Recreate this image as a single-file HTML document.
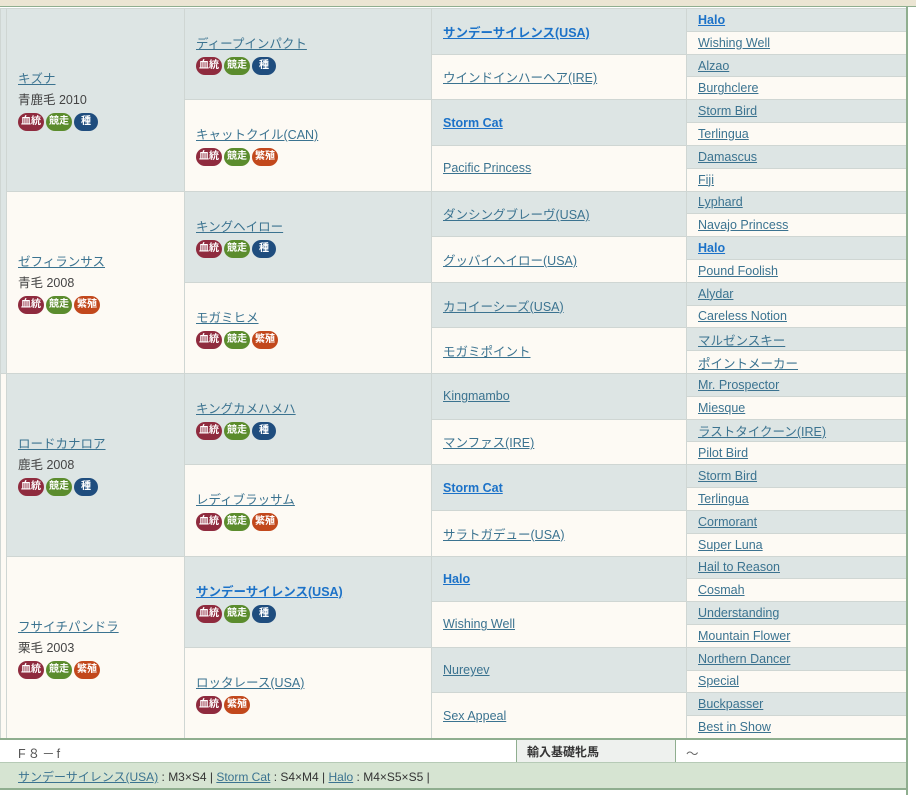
<!DOCTYPE html>
<html><head><meta charset="utf-8"><style>
*{margin:0;padding:0;box-sizing:border-box}
body{width:916px;height:795px;background:#fff;font-family:"Liberation Sans","Noto Sans CJK JP",sans-serif;font-size:12.5px;color:#333;position:relative;overflow:hidden}
#top{position:absolute;left:0;top:0;width:916px;height:7px;background:#ebe5d3;border-bottom:1px solid #8fae8f}
#rt{position:absolute;left:906px;top:7px;width:10px;height:788px;background:#fff;border-left:2px solid #8fae8f}
table{position:absolute;left:0;top:8px;width:906px;height:730px;border-collapse:collapse;table-layout:fixed}
td{border:1px solid #cfd6d3;vertical-align:middle;padding:0 0 0 11px;overflow:hidden;white-space:nowrap}
tr{height:22.8125px}
.g{background:#dde5e4}.c{background:#fdfaf4}
a{color:#3b7390;text-decoration:underline}
a.b{color:#1c72c8;font-weight:bold}
.s{color:#444;margin:2px 0 4px}
.bd{display:flex;gap:2px;margin-top:5px}
.bd span{display:inline-block;height:18px;border-radius:9px;color:#fff;font-size:10px;line-height:18px;padding:0 3px;font-weight:bold}
.r{background:#8f2b3e}.n{background:#5b8c2d}.v{background:#1f4d7e;width:24px;text-align:center}.o{background:#c2481c}
.x{padding:0}
#f1{position:absolute;left:0;top:738px;width:906px;height:24px;border-top:2px solid #8fae8f;background:#fff}
#f2{position:absolute;left:0;top:762px;width:906px;height:28px;background:#d6e4d2;border-top:1px solid #b6cab6;border-bottom:2px solid #8fae8f;font-size:12px;padding:5px 0 0 18px}
</style></head><body>
<div id="top"></div>
<table>
<colgroup><col style="width:6px"><col style="width:178px"><col style="width:247px"><col style="width:255px"><col style="width:220px"></colgroup>
<tr><td class="x g" rowspan="16"></td><td class="g" rowspan="8"><a>キズナ</a><div class="s">青鹿毛 2010</div><div class="bd"><span class="r">血統</span><span class="n">競走</span><span class="v">種</span></div></td><td class="g" rowspan="4"><a>ディープインパクト</a><div class="bd"><span class="r">血統</span><span class="n">競走</span><span class="v">種</span></div></td><td class="g" rowspan="2"><a class="b">サンデーサイレンス(USA)</a></td><td class="g"><a class="b">Halo</a></td></tr>
<tr><td class="c"><a>Wishing Well</a></td></tr>
<tr><td class="c" rowspan="2"><a>ウインドインハーヘア(IRE)</a></td><td class="g"><a>Alzao</a></td></tr>
<tr><td class="c"><a>Burghclere</a></td></tr>
<tr><td class="c" rowspan="4"><a>キャットクイル(CAN)</a><div class="bd"><span class="r">血統</span><span class="n">競走</span><span class="o">繁殖</span></div></td><td class="g" rowspan="2"><a class="b">Storm Cat</a></td><td class="g"><a>Storm Bird</a></td></tr>
<tr><td class="c"><a>Terlingua</a></td></tr>
<tr><td class="c" rowspan="2"><a>Pacific Princess</a></td><td class="g"><a>Damascus</a></td></tr>
<tr><td class="c"><a>Fiji</a></td></tr>
<tr><td class="c" rowspan="8"><a>ゼフィランサス</a><div class="s">青毛 2008</div><div class="bd"><span class="r">血統</span><span class="n">競走</span><span class="o">繁殖</span></div></td><td class="g" rowspan="4"><a>キングヘイロー</a><div class="bd"><span class="r">血統</span><span class="n">競走</span><span class="v">種</span></div></td><td class="g" rowspan="2"><a>ダンシングブレーヴ(USA)</a></td><td class="g"><a>Lyphard</a></td></tr>
<tr><td class="c"><a>Navajo Princess</a></td></tr>
<tr><td class="c" rowspan="2"><a>グッバイヘイロー(USA)</a></td><td class="g"><a class="b">Halo</a></td></tr>
<tr><td class="c"><a>Pound Foolish</a></td></tr>
<tr><td class="c" rowspan="4"><a>モガミヒメ</a><div class="bd"><span class="r">血統</span><span class="n">競走</span><span class="o">繁殖</span></div></td><td class="g" rowspan="2"><a>カコイーシーズ(USA)</a></td><td class="g"><a>Alydar</a></td></tr>
<tr><td class="c"><a>Careless Notion</a></td></tr>
<tr><td class="c" rowspan="2"><a>モガミポイント</a></td><td class="g"><a>マルゼンスキー</a></td></tr>
<tr><td class="c"><a>ポイントメーカー</a></td></tr>
<tr><td class="x c" rowspan="16"></td><td class="g" rowspan="8"><a>ロードカナロア</a><div class="s">鹿毛 2008</div><div class="bd"><span class="r">血統</span><span class="n">競走</span><span class="v">種</span></div></td><td class="g" rowspan="4"><a>キングカメハメハ</a><div class="bd"><span class="r">血統</span><span class="n">競走</span><span class="v">種</span></div></td><td class="g" rowspan="2"><a>Kingmambo</a></td><td class="g"><a>Mr. Prospector</a></td></tr>
<tr><td class="c"><a>Miesque</a></td></tr>
<tr><td class="c" rowspan="2"><a>マンファス(IRE)</a></td><td class="g"><a>ラストタイクーン(IRE)</a></td></tr>
<tr><td class="c"><a>Pilot Bird</a></td></tr>
<tr><td class="c" rowspan="4"><a>レディブラッサム</a><div class="bd"><span class="r">血統</span><span class="n">競走</span><span class="o">繁殖</span></div></td><td class="g" rowspan="2"><a class="b">Storm Cat</a></td><td class="g"><a>Storm Bird</a></td></tr>
<tr><td class="c"><a>Terlingua</a></td></tr>
<tr><td class="c" rowspan="2"><a>サラトガデュー(USA)</a></td><td class="g"><a>Cormorant</a></td></tr>
<tr><td class="c"><a>Super Luna</a></td></tr>
<tr><td class="c" rowspan="8"><a>フサイチパンドラ</a><div class="s">栗毛 2003</div><div class="bd"><span class="r">血統</span><span class="n">競走</span><span class="o">繁殖</span></div></td><td class="g" rowspan="4"><a class="b">サンデーサイレンス(USA)</a><div class="bd"><span class="r">血統</span><span class="n">競走</span><span class="v">種</span></div></td><td class="g" rowspan="2"><a class="b">Halo</a></td><td class="g"><a>Hail to Reason</a></td></tr>
<tr><td class="c"><a>Cosmah</a></td></tr>
<tr><td class="c" rowspan="2"><a>Wishing Well</a></td><td class="g"><a>Understanding</a></td></tr>
<tr><td class="c"><a>Mountain Flower</a></td></tr>
<tr><td class="c" rowspan="4"><a>ロッタレース(USA)</a><div class="bd"><span class="r">血統</span><span class="o">繁殖</span></div></td><td class="g" rowspan="2"><a>Nureyev</a></td><td class="g"><a>Northern Dancer</a></td></tr>
<tr><td class="c"><a>Special</a></td></tr>
<tr><td class="c" rowspan="2"><a>Sex Appeal</a></td><td class="g"><a>Buckpasser</a></td></tr>
<tr><td class="c"><a>Best in Show</a></td></tr>
</table>
<div id="f1"><span style="position:absolute;left:18px;top:3px;color:#555;letter-spacing:2px">F８－f</span><div style="position:absolute;left:516px;top:0;width:160px;height:22px;background:#eef1ee;border-left:1px solid #8fae8f;border-right:1px solid #8fae8f;font-weight:bold;font-size:12px;padding:3px 0 0 10px">輸入基礎牝馬</div><span style="position:absolute;left:686px;top:3px;color:#666">〜</span></div>
<div id="f2"><a>サンデーサイレンス(USA)</a> : M3×S4 | <a>Storm Cat</a> : S4×M4 | <a>Halo</a> : M4×S5×S5 |</div>
<div id="rt"></div>
</body></html>
